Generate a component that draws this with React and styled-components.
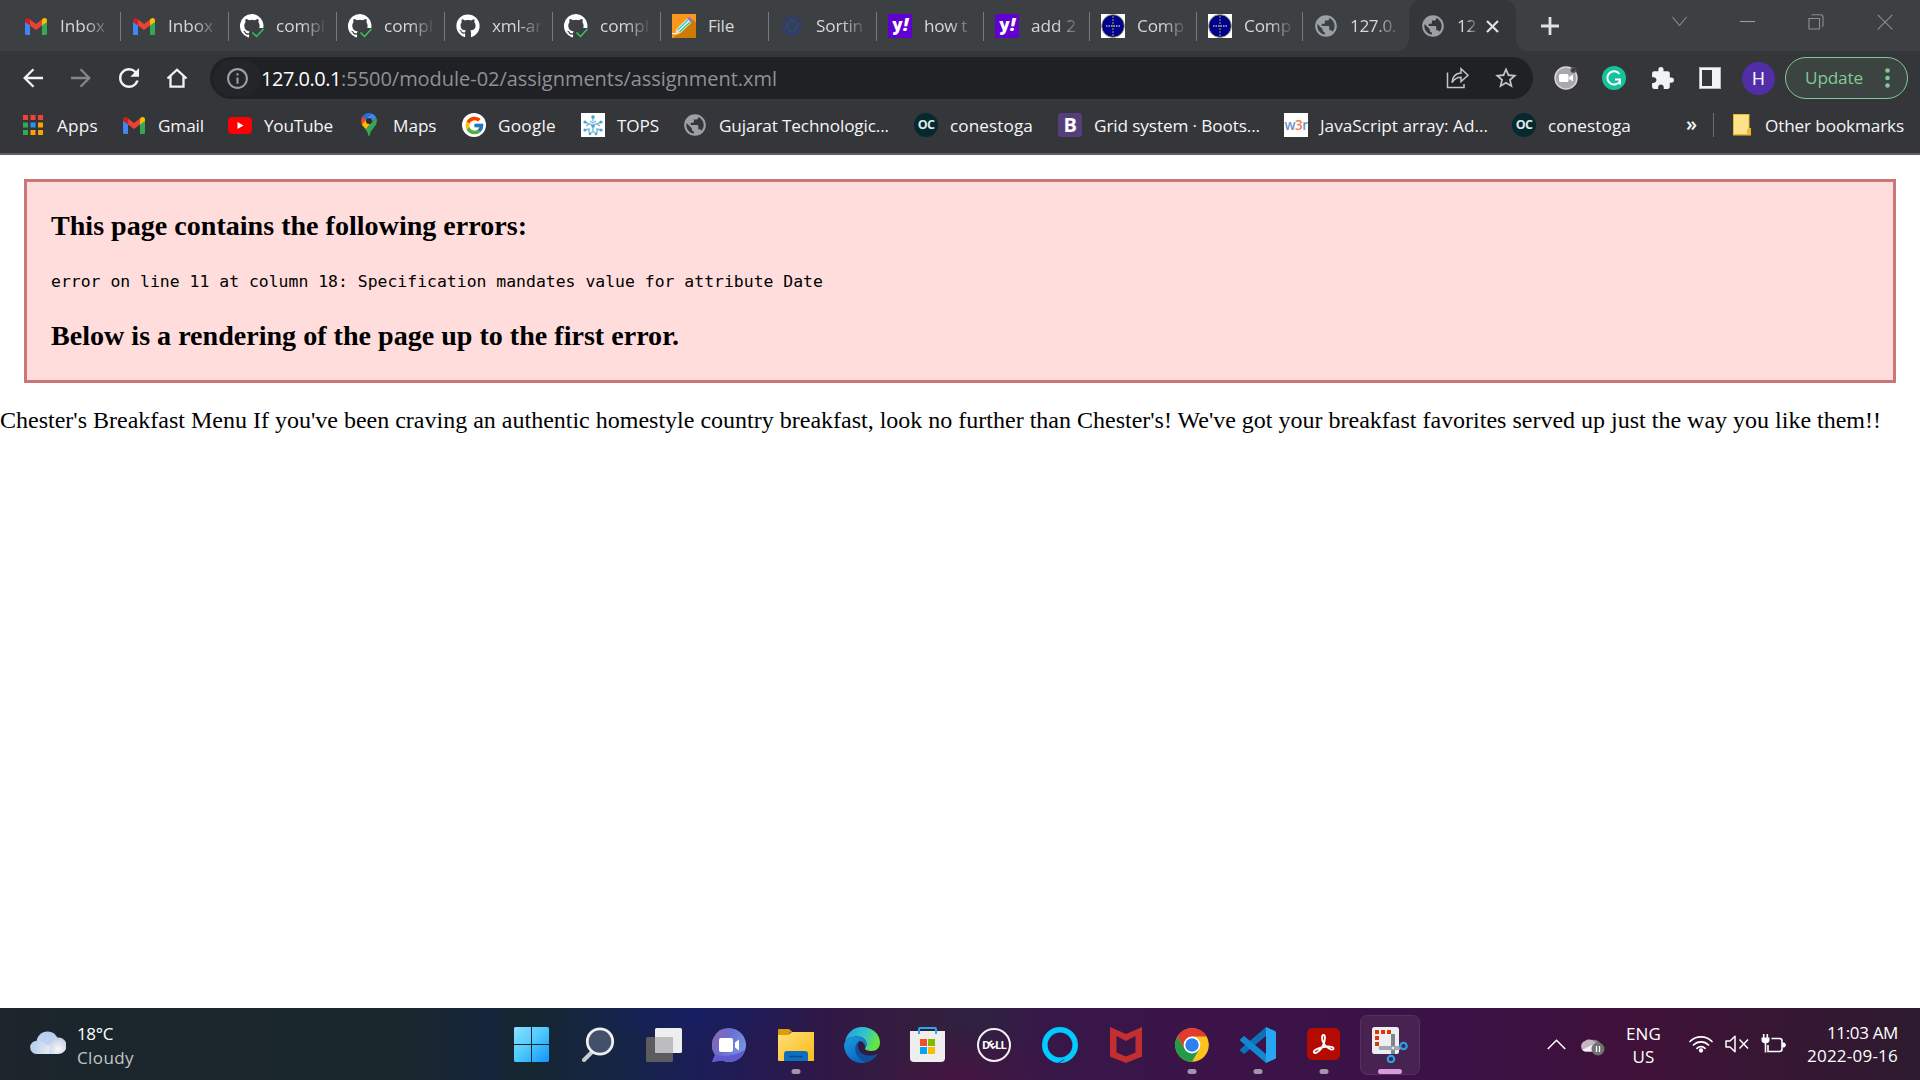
import React, { useLayoutEffect, useRef, useState } from "react";
import styled, { createGlobalStyle, css } from "styled-components";
import { MdPublic, MdExtension, MdRefresh, MdInfoOutline, MdStarBorder } from "react-icons/md";
import { FaGithub } from "react-icons/fa";
import { FcGoogle } from "react-icons/fc";

const ui = '"Open Sans", "Noto Sans", sans-serif';

const GlobalStyle = createGlobalStyle`
  * { box-sizing: border-box; }
  html, body { margin: 0; padding: 0; background: #fff; overflow: hidden; }
  svg { display: block; flex: none; }
`;

const Screen = styled.div`
  width: 1920px;
  height: 1080px;
  display: flex;
  flex-direction: column;
  font-family: ${ui};
  overflow: hidden;
`;

/* ---------- fitted text ---------- */
const FitSpan = styled.span`
  display: inline-block;
  white-space: pre;
`;

function Fit({ w, children }) {
  const ref = useRef(null);
  const [spacing, setSpacing] = useState(0);
  useLayoutEffect(() => {
    const natural = ref.current.getBoundingClientRect().width;
    setSpacing((w - natural) / children.length);
  }, [w, children]);
  return (
    <FitSpan ref={ref} style={{ letterSpacing: `${spacing}px` }}>
      {children}
    </FitSpan>
  );
}

/* ---------- tab strip ---------- */
const TabStrip = styled.div`
  height: 51px;
  flex: none;
  display: flex;
  background: #3c4043;
  padding-left: 12px;
`;

const Tab = styled.div`
  width: ${(p) => p.$w}px;
  height: 51px;
  flex: none;
  display: flex;
  align-items: center;
  padding: 1px 0 0 12px;
  color: #d5d8db;
  font-size: 17.2px;
  line-height: 24px;
  background: linear-gradient(#777b7e, #777b7e) left 12px / ${(p) => (p.$first ? 0 : 1)}px 29px no-repeat;
`;

const ActiveTab = styled(Tab)`
  position: relative;
  background: #35363a;
  border-radius: 12px 12px 0 0;
  padding-left: 12px;
  &::before,
  &::after {
    content: "";
    position: absolute;
    bottom: 0;
    width: 11px;
    height: 11px;
  }
  &::before {
    left: -11px;
    background: radial-gradient(circle at 0 0, transparent 10.5px, #35363a 11px);
  }
  &::after {
    right: -11px;
    background: radial-gradient(circle at 100% 0, transparent 10.5px, #35363a 11px);
  }
`;

const Favicon = styled.span`
  width: 24px;
  height: 24px;
  flex: none;
  display: flex;
  align-items: center;
  justify-content: center;
  color: #9aa0a6;
`;

const TabTitle = styled.span`
  margin-left: 12px;
  width: ${(p) => p.$w || 51}px;
  flex: none;
  white-space: nowrap;
  ${(p) =>
    p.$fade &&
    css`
      mask-image: linear-gradient(90deg, #000 50%, transparent 100%);
    `}
`;

const CloseTab = styled.span`
  margin-left: 8px;
`;

const NewTab = styled.div`
  width: 18px;
  margin-left: 25px;
  display: flex;
  align-items: center;
`;

const WindowControls = styled.div`
  margin-left: auto;
  height: 43px;
  display: flex;
  align-items: center;
  gap: 53px;
  padding-right: 27px;
`;

/* ---------- toolbar ---------- */
const Toolbar = styled.div`
  height: 54px;
  flex: none;
  display: flex;
  align-items: center;
  background: #35363a;
  padding-left: 9px;
`;

const NavButton = styled.div`
  width: 48px;
  height: 42px;
  flex: none;
  display: flex;
  align-items: center;
  justify-content: center;
  color: ${(p) => (p.$dim ? "#85868a" : "#f1f3f4")};
`;

const Omnibox = styled.div`
  width: 1323px;
  height: 42px;
  margin-left: 9px;
  flex: none;
  display: flex;
  align-items: center;
  border-radius: 21px;
  background: #202124;
  color: #9aa0a6;
  padding-left: 3px;
  font-size: 20px;
  line-height: 28px;
`;

const SiteInfo = styled.span`
  width: 48px;
  height: 36px;
  display: flex;
  align-items: center;
  justify-content: center;
  border-radius: 18px;
  background: #242528;
`;

const Url = styled.div`
  display: flex;
  flex: 1;
  padding-top: 2px;
  color: #8e9196;
`;

const Host = styled.span`
  color: #fff;
`;

const OmniActions = styled.div`
  display: flex;
  align-items: center;
  color: #c4c5c7;
  padding-right: 3px;
`;

const OmniAction = styled.span`
  width: 48px;
  display: flex;
  justify-content: center;
  color: #c4c5c7;
`;

const Avatar = styled.div`
  width: 33px;
  height: 33px;
  margin-left: 8px;
  border-radius: 50%;
  display: flex;
  align-items: center;
  justify-content: center;
  background: #512da8;
  color: #f4f1fa;
  font: 400 18px/33px Roboto, sans-serif;
`;

const UpdateButton = styled.div`
  width: 123px;
  height: 42px;
  margin-left: 10px;
  display: flex;
  align-items: center;
  justify-content: space-between;
  padding: 0 17px 0 19px;
  border: 1.5px solid #81c995;
  border-radius: 21px;
  background: #3c4442;
  color: #81c995;
  font-size: 17.2px;
  line-height: 24px;
`;

/* ---------- bookmarks ---------- */
const BookmarksBar = styled.div`
  height: 50px;
  flex: none;
  display: flex;
  align-items: center;
  padding: 0 0 8px 21px;
  background: #35363a;
  border-bottom: 2px solid #606165;
  color: #f4f5f6;
  font-size: 17.2px;
  line-height: 24px;
`;

const Bookmark = styled.div`
  width: ${(p) => p.$w}px;
  flex: none;
  display: flex;
  align-items: center;
  gap: 12px;
`;

const BookmarkLabel = styled.span`
  padding-top: 2px;
`;

const Overflow = styled.span`
  width: 27px;
  margin-left: 1px;
  font-size: 20px;
  font-weight: 600;
  line-height: 20px;
  padding-bottom: 2px;
`;

const OtherBookmarks = styled.div`
  display: flex;
  align-items: center;
  height: 24px;
  padding-left: 19px;
  border-left: 1px solid #6b6d70;
  gap: 14px;
`;

const Chip = styled.span`
  width: 24px;
  height: 24px;
  display: flex;
  align-items: center;
  justify-content: center;
  border-radius: ${(p) => p.$r || "0"};
  background: ${(p) => p.$bg};
  color: ${(p) => p.$fg || "#fff"};
  font: ${(p) => p.$weight || 700} ${(p) => p.$size || 14}px/24px ${ui};
  letter-spacing: -0.6px;
`;

const YahooMark = styled.span`
  display: inline-block;
  padding-bottom: 4px;
  font-weight: 800;
`;

const Bang = styled.i`
  display: inline-block;
  margin-left: 1px;
  font-size: 18px;
`;

const Orange = styled.span`
  color: #f0814f;
`;

/* ---------- page ---------- */
const Page = styled.main`
  height: 853px;
  flex: none;
  padding-top: 24px;
  background: #fff;
  color: #000;
  font: 24px/27px "Liberation Serif", "Times New Roman", serif;
`;

const ErrorBox = styled.section`
  margin: 0 24px;
  height: 204px;
  border: 3px solid #c77;
  background: #fdd;
  padding: 28px 24px 0;
`;

const ErrorHeading = styled.h3`
  margin: 0;
  font-size: 28.08px;
  line-height: 32px;
  font-weight: 700;
`;

const ErrorText = styled.div`
  margin: 28px 0 27px;
  font: 16.44px/23px "DejaVu Sans Mono", monospace;
`;

const Body = styled.div`
  padding-top: 24px;
  white-space: nowrap;
`;

/* ---------- taskbar ---------- */
const Taskbar = styled.footer`
  height: 72px;
  flex: none;
  display: flex;
  align-items: center;
  color: #fff;
  font-size: 17px;
  line-height: 24px;
  background:
    radial-gradient(ellipse 90px 60px at 965px 100%, rgba(78, 14, 66, 0.7), transparent),
    radial-gradient(ellipse 130px 40px at 690px 0, rgba(20, 32, 110, 0.5), transparent),
    linear-gradient(90deg, #1e242c 0, #1a262c 80px, #1a272d 400px, #15253a 490px, #16262f 520px, #152545 620px,
      #1b1d58 700px, #251a50 760px, #321844 840px, #341e3e 920px, #2e2240 975px, #371848 1040px, #3b1348 1200px,
      #3a1246 1450px, #401139 1640px, #371634 1760px, #2d1a2e 1920px);
`;

const Weather = styled.div`
  width: 499px;
  flex: none;
  display: flex;
  align-items: center;
  gap: 11px;
  padding-left: 30px;
`;

const Lines = styled.div`
  display: flex;
  flex-direction: column;
  align-items: ${(p) => p.$align || "flex-start"};
  line-height: ${(p) => p.$lh || 24}px;
  padding-top: ${(p) => p.$pt || 0}px;
`;

const Muted = styled.span`
  color: #c3c5c8;
`;

const Apps = styled.div`
  display: flex;
  align-items: center;
`;

const AppCell = styled.div`
  position: relative;
  width: 66px;
  height: 72px;
  display: flex;
  align-items: center;
  justify-content: center;
  padding-top: 1px;
  &::after {
    content: "";
    display: ${(p) => (p.$running || p.$active ? "block" : "none")};
    position: absolute;
    bottom: 6px;
    left: 50%;
    width: ${(p) => (p.$active ? 24 : 9)}px;
    height: 5px;
    border-radius: 3px;
    transform: translateX(-50%);
    background: ${(p) => (p.$active ? "#d99be0" : "#a294a9")};
  }
`;

const ActiveTile = styled.span`
  width: 60px;
  height: 60px;
  display: flex;
  align-items: center;
  justify-content: center;
  border-radius: 7px;
  border: 1px solid #573060;
  background: #482352;
`;

const DellBadge = styled.span`
  width: 34px;
  height: 34px;
  border-radius: 50%;
  border: 2px solid #f2f2f2;
  display: flex;
  align-items: center;
  justify-content: center;
  font: 700 11px/30px "Open Sans", sans-serif;
  letter-spacing: -0.7px;
`;

const TiltedE = styled.span`
  display: inline-block;
  transform: rotate(-35deg);
`;

const Tray = styled.div`
  margin-left: auto;
  display: flex;
  align-items: center;
  padding-right: 22px;
`;

const TraySlot = styled.div`
  width: ${(p) => p.$w}px;
  flex: none;
  display: flex;
`;

/* ---------- icons ---------- */
const Gmail = () => (
  <svg width="22" height="17" viewBox="0 0 22 17">
    <path d="M0 3v12.500A1.500 1.500 0 0 0 1.500 17H5V6z" fill="#4285f4" />
    <path d="M22 3v12.500a1.500 1.500 0 0 1-1.500 1.500H17V6z" fill="#34a853" />
    <path d="M17 1.600V7.600L22 4V2.200C22 .2 19.600-.7 18 .6z" fill="#fbbc04" />
    <path d="M5 1.600V7.600L0 4V2.200C0 .2 2.400-.7 4 .6z" fill="#c5221f" />
    <path d="M5 7.600V1.500l6 4.600 6-4.600v6.100l-6 4.500z" fill="#ea4335" />
  </svg>
);

const GithubChecked = () => (
  <svg width="24" height="24" viewBox="0 0 24 24">
    <path d="M12 0a12 12 0 0 0-3.800 23.400c.6.100.8-.3.800-.6v-2.200c-3.300.7-4-1.400-4-1.400-.6-1.400-1.400-1.800-1.400-1.800-1-.7.1-.7.1-.7 1.200.1 1.900 1.200 1.900 1.200 1 1.900 2.800 1.300 3.500 1 0-.8.400-1.300.7-1.600-2.700-.3-5.500-1.300-5.500-5.900 0-1.300.5-2.400 1.200-3.200 0-.4-.5-1.600.2-3.200 0 0 1-.3 3.300 1.200a11.500 11.500 0 0 1 6 0C17.300 4.700 18.300 5 18.300 5c.7 1.600.2 2.800.1 3.200.8.800 1.200 1.900 1.200 3.200 0 1-.1 1.900-.4 2.600h4.100A12 12 0 0 0 12 0z" fill="#fff" />
    <path d="M12.500 18.500l4 4 7-7.500" fill="none" stroke="#34c759" strokeWidth="1.500" />
  </svg>
);

const Pencil = () => (
  <svg width="24" height="24" viewBox="0 0 24 24">
    <rect width="24" height="24" fill="#f9981c" />
    <path d="M2 22L22 6l2 3v15H2z" fill="#cf7a05" />
    <path d="M4.500 15l4 4-6 2.500z" fill="#f5deb8" />
    <path d="M4.500 15L15.500 4.500l4 4L8.500 19z" fill="#f4fbf7" />
    <path d="M5.700 16L16.500 5.500" stroke="#3bc7d4" strokeWidth="1.500" />
    <path d="M7.500 18L18.700 7.500" stroke="#2fcf6a" strokeWidth="1.500" />
    <path d="M15.500 4.500l2-1.700 4 4-2 1.700z" fill="#a968c0" />
    <path d="M0 19.500h3" stroke="#fff" strokeWidth="1" />
  </svg>
);

const Gear = () => (
  <svg width="22" height="22" viewBox="0 0 22 22" fill="none">
    <circle cx="11" cy="11" r="8.500" stroke="#2a3c8c" strokeWidth="2.400" strokeDasharray="3 1.400" />
    <circle cx="11" cy="11" r="5" stroke="#2e4a72" strokeWidth="1.800" />
    <circle cx="11" cy="11" r="3.500" fill="#303f66" />
  </svg>
);

const Crest = () => (
  <svg width="24" height="24" viewBox="0 0 24 24">
    <rect width="24" height="24" fill="#fff" />
    <circle cx="12" cy="12" r="11.400" fill="#00008f" stroke="#a9a95c" strokeWidth="1" />
    <path d="M12 2v20" stroke="#8d8b6a" strokeWidth="1.200" strokeDasharray="2 1" />
    <path d="M5 12h14" stroke="#889" strokeWidth="2.200" strokeDasharray="1.500 1" />
  </svg>
);

const AppsGrid = () => (
  <svg width="20" height="20" viewBox="0 0 20 20">
    {["#f44336", "#f44336", "#f44336", "#34a853", "#2196f3", "#ffa000", "#34a853", "#ffa000", "#ffa000"].map((c, i) => (
      <rect key={i} x={(i % 3) * 7.5} y={Math.floor(i / 3) * 7.5} width="5" height="5" fill={c} />
    ))}
  </svg>
);

const YouTube = () => (
  <svg width="24" height="17" viewBox="0 0 24 17">
    <rect width="24" height="17" rx="4" fill="#f00" />
    <path d="M9.500 5v7l6-3.500z" fill="#fff" />
  </svg>
);

const MapPin = () => (
  <svg width="24" height="24" viewBox="0 0 24 24">
    <path d="M4 8.200A8 8 0 0 1 5.800 3l5.200 4.500L6.500 13C5 11.500 4 10 4 8.200z" fill="#ea4335" />
    <path d="M5.800 3A8 8 0 0 1 14.500.5L9 6.500z" fill="#1a73e8" />
    <path d="M14.500.5c2 .7 3.700 2.200 4.600 4L12 12 9 6.500z" fill="#4285f4" />
    <path d="M4.800 11.500L12 4l3 4-6 8.500C7.500 14.500 5.500 13 4.800 11.500z" fill="#fbbc04" />
    <path d="M19.100 4.500c2 4.500 0 7.500-2.600 10.500-2.200 2.600-3.300 4.500-3.700 7-.2 1.200-1.400 1.200-1.600 0-.4-2.200-1.200-3.800-2.700-5.500z" fill="#34a853" />
    <circle cx="12" cy="8" r="3" fill="#2b2c30" />
  </svg>
);

const Snow = () => (
  <svg width="24" height="24" viewBox="0 0 24 24">
    <rect width="24" height="24" fill="#fff" />
    <g stroke="#74b9da" strokeWidth="1.400" fill="none">
      <path d="M12 5v3M8.500 10.500L12 13l3.500-2.500M12 13v5M4 9l4 2-3 2M20 9l-4 2 3 2M4 17l4-1v4M20 17l-4-1v4M9 20.500l3-2 3 2M9 8l3 2 3-2" />
    </g>
    <g fill="#4aa3cf">
      <circle cx="12" cy="4" r="1.800" /><circle cx="4" cy="9" r="1.600" /><circle cx="20" cy="9" r="1.600" />
      <circle cx="4" cy="17" r="1.600" /><circle cx="20" cy="17" r="1.600" /><circle cx="9" cy="21" r="1.300" /><circle cx="15" cy="21" r="1.300" />
      <circle cx="12" cy="13" r="1.800" />
    </g>
  </svg>
);

const Globe = () => <MdPublic size={26} />;

const YahooChip = () => (
  <Chip $bg="#6001d2" $size={17}><YahooMark>y<Bang>!</Bang></YahooMark></Chip>
);
const OcChip = () => <Chip $bg="#06282f" $r="50%" $fg="#dfe8ea" $size={12.5}>OC</Chip>;
const GoogleChip = () => <Chip $bg="#fff" $r="50%"><FcGoogle size={21} /></Chip>;
const BootChip = () => <Chip $bg="#563d7c" $r="3px" $size={20}>B</Chip>;
const W3rChip = () => (
  <Chip $bg="#fff" $fg="#6b90ca" $size={13.5} $weight={600}><span>w<Orange>3</Orange>r</span></Chip>
);

const Line = ({ w, h, d, sw = 2, color = "currentColor" }) => (
  <svg width={w} height={h} viewBox={`0 0 ${w} ${h}`} fill="none" stroke={color} strokeWidth={sw}>
    <path d={d} />
  </svg>
);

const ShareIcon = () => (
  <svg width="24" height="22" viewBox="0 0 24 22" fill="none" stroke="currentColor" strokeWidth="1.500">
    <path d="M1.500 5.500V20.500H18V17" />
    <path d="M6 15.500C6.500 9.500 10 6.300 15 6V1.800l7 6.500-7 6.200v-4.200c-4 0-6.500 1.400-9 5.200z" />
  </svg>
);

const ZoomExt = () => (
  <svg width="24" height="24" viewBox="0 0 24 24">
    <circle cx="12" cy="12" r="11" fill="#a9a9ab" stroke="#d6d6d7" strokeWidth="1.500" />
    <rect x="5" y="8" width="9.500" height="8" rx="1.500" fill="#fff" />
    <path d="M15 11l4-2.500v7L15 13z" fill="#fff" />
    <circle cx="19.500" cy="4" r="3" fill="#55565a" />
    <path d="M18 5.500l3-3" stroke="#28292c" strokeWidth="1.200" />
  </svg>
);

const Grammarly = () => (
  <svg width="24" height="24" viewBox="0 0 24 24">
    <circle cx="12" cy="12" r="12" fill="#15c39a" />
    <path d="M17.500 8A6.700 6.700 0 1 0 17.700 15.500M13 13.500h5v5" fill="none" stroke="#fff" strokeWidth="2" />
  </svg>
);

const SidePanel = () => (
  <svg width="22" height="22" viewBox="0 0 22 22">
    <rect width="22" height="22" fill="#f1f3f4" />
    <rect x="3" y="3" width="10" height="16" fill="#35363a" />
    <rect x=".5" y=".5" width="21" height="21" fill="none" stroke="#b9babc" />
  </svg>
);

const Folder = () => (
  <svg width="18" height="22" viewBox="0 0 18 22">
    <path d="M0 0h16.500v14H18v7.500H0z" fill="#e9b82e" />
    <path d="M1 1h14.500v14l-1.500.5V20H1z" fill="#ffe28a" />
  </svg>
);

const WeatherCloud = () => (
  <svg width="36" height="26" viewBox="0 0 36 26">
    <defs>
      <linearGradient id="wcA" x1="0" y1="0" x2="0" y2="1"><stop offset="0" stopColor="#b9cdee" /><stop offset="1" stopColor="#c6d8fa" /></linearGradient>
      <radialGradient id="wcB" gradientUnits="userSpaceOnUse" cx="27" cy="19" r="24"><stop offset="0" stopColor="#f7f8fa" /><stop offset="1" stopColor="#bcd0ec" /></radialGradient>
      <radialGradient id="wcC" gradientUnits="userSpaceOnUse" cx="28" cy="18" r="11"><stop offset="0" stopColor="#f7f8fa" /><stop offset="1" stopColor="#c3d0e4" /></radialGradient>
    </defs>
    <circle cx="17.500" cy="11.500" r="11" fill="url(#wcA)" />
    <path d="M6.500 23A6.500 6.500 0 0 1 7 9.800c4 0 7 1.700 8.500 4.200h10V23z" fill="url(#wcB)" />
    <path d="M20 14a8.300 8.300 0 1 1 7.700 9H19z" fill="url(#wcC)" />
  </svg>
);

const StartIcon = () => (
  <svg width="36" height="35" viewBox="0 0 36 35">
    <defs><linearGradient id="st" x1="0" y1="0" x2="1" y2="1"><stop offset="0" stopColor="#8ae4ff" /><stop offset=".5" stopColor="#4cc8fc" /><stop offset="1" stopColor="#0e93fa" /></linearGradient></defs>
    <path d="M1 0h16v17H0V1zM18 0h16l1 1v16H18zM0 18h17v17H1l-1-1zM18 18h17v16l-1 1H18z" fill="url(#st)" />
  </svg>
);

const SearchIcon = () => (
  <svg width="34" height="35" viewBox="0 0 34 35">
    <path d="M12 24L3 33" stroke="#c9ccd1" strokeWidth="4" strokeLinecap="round" />
    <circle cx="19" cy="14.500" r="12.700" fill="#434f6b" stroke="#eceef0" strokeWidth="2.800" />
  </svg>
);

const TaskView = () => (
  <svg width="36" height="34" viewBox="0 0 36 34">
    <rect x="0" y="9" width="27" height="25" rx="1.500" fill="#5c5c5f" />
    <rect x="9" y="0" width="27" height="25" rx="1.500" fill="#eeeeef" />
    <path d="M9 9h18v16H10.500L9 23.500z" fill="#bdbdbf" />
  </svg>
);

const Chat = () => (
  <svg width="36" height="34" viewBox="0 0 36 34">
    <defs><linearGradient id="ch" x1="0" y1="0" x2="1" y2=".5"><stop offset="0" stopColor="#8f63a8" /><stop offset=".5" stopColor="#6a6fd0" /><stop offset="1" stopColor="#7694e4" /></linearGradient></defs>
    <path d="M17 0a17 17 0 1 1-7 32.500L0 34l3-7A17 17 0 0 1 17 0z" fill="url(#ch)" />
    <path d="M3 27Q18 30 33 22 A17 17 0 0 1 10 32.500L0 34z" fill="#5f5bce" />
    <rect x="7" y="10" width="14" height="14" rx="2" fill="#fff" />
    <path d="M23 14.500l4-3v11l-4-3z" fill="#fff" />
  </svg>
);

const Explorer = () => (
  <svg width="36" height="34" viewBox="0 0 36 34">
    <defs><linearGradient id="ex" x1="0" y1="0" x2="1" y2="1"><stop offset="0" stopColor="#ffdf78" /><stop offset="1" stopColor="#fbbb14" /></linearGradient></defs>
    <path d="M0 1.500Q0 1 1 1h10l4 3.500h-3L10 8H0z" fill="#e09b0c" />
    <path d="M0 7h10l4-3h22v28.500q0 .5-1 .5H1q-1 0-1-1z" fill="url(#ex)" />
    <path d="M6 33v-7q0-3 3-3h18q3 0 3 3v7z" fill="#0d6fc0" />
    <path d="M11 28.500h14" stroke="#0a4a8a" strokeWidth="1.500" />
  </svg>
);

const Edge = () => (
  <svg width="36" height="36" viewBox="0 0 36 36">
    <defs>
      <linearGradient id="e1" x1="0" y1="0" x2="1" y2=".3"><stop offset="0" stopColor="#1e9fe0" /><stop offset=".6" stopColor="#2fc4d0" /><stop offset="1" stopColor="#67e53f" /></linearGradient>
      <linearGradient id="e2" x1="0" y1="0" x2=".6" y2="1"><stop offset="0" stopColor="#1b9de2" /><stop offset="1" stopColor="#0b68bd" /></linearGradient>
    </defs>
    <path d="M1 15C2.500 6 9.500 0 18 0c10 0 18 7 18 15.500 0 5-3.500 8.500-8.500 8.500-3.500 0-6.500-1-6.500-2.500 0-1 1.500-1.500 1.500-4.500 0-4-4-7.500-9-7.500C8 9.500 3.500 11 1 15z" fill="url(#e1)" />
    <path d="M0 17.500C1 12.500 7 9.500 12.500 9.500c5.500 0 10 3.500 10 7.500 0 1.500-.5 2.500-1.200 3.300C21 17 18.500 14 15.500 14 11 18 12 31 22 35.500c-1.200.4-2.600.5-4 .5C8 36 0 28 0 17.500z" fill="url(#e2)" />
    <path d="M15.500 14c-3.500 2-4.800 6-4 10 1.200 6 6 11 12 11.300 4-1.200 7.500-4 9.700-7.500.4-.8-.3-1.200-.9-.8-7 3.500-16 1-18-5.500-.9-3-.2-6 1.200-7.500z" fill="#114f9c" />
  </svg>
);

const Store = () => (
  <svg width="36" height="35" viewBox="0 0 36 35">
    <path d="M0 4h35v27q0 4-4 4H4q-4 0-4-4z" fill="#eeeeef" />
    <path d="M9 7V2q0-1 1-1h15q1 0 1 1v5" fill="none" stroke="#28a8ea" strokeWidth="2" />
    <rect x="10" y="12" width="7" height="7" fill="#f25022" /><rect x="18" y="12" width="7" height="7" fill="#7fba00" />
    <rect x="10" y="20" width="7" height="7" fill="#00a4ef" /><rect x="18" y="20" width="7" height="7" fill="#ffb900" />
  </svg>
);

const Alexa = () => (
  <svg width="36" height="36" viewBox="0 0 36 36" fill="none">
    <circle cx="18" cy="18" r="15.200" stroke="#00caff" strokeWidth="5.600" />
    <path d="M15.500 32v3.700q6-1.500 9.500-5.500l-5 .5H14q1.500.3 1.500 1.300z" fill="#00caff" />
    <path d="M16.300 35.800q3.500-1.300 6-3.600" stroke="#3a1348" strokeWidth=".8" />
  </svg>
);

const McAfee = () => (
  <svg width="32" height="36" viewBox="0 0 32 36">
    <path fillRule="evenodd" d="M0 0l16 7 16-7v29.500L16 36 0 29.500zM6.500 9v16.500L16 29.500l9.500-4V9L16 14z" fill="#c32f2f" />
  </svg>
);

const Chrome = () => (
  <svg width="34" height="34" viewBox="0 0 34 34">
    <circle cx="17" cy="17" r="16.800" fill="#fcc31e" />
    <path d="M2.450 8.600A16.800 16.800 0 0 1 31.550 8.600H17L9.700 21.200z" fill="#e33b2e" />
    <path d="M2.450 8.600A16.800 16.800 0 0 0 17 33.800L24.300 21.200H9.700z" fill="#229a48" />
    <circle cx="17" cy="17" r="8.400" fill="#fff" />
    <circle cx="17" cy="17" r="6.700" fill="#2f7ff0" />
  </svg>
);

const VSCode = () => (
  <svg width="36" height="36" viewBox="0 0 36 36">
    <path d="M26 9L4 27l-3.500-3q-.8-1 0-2L26 0z" fill="#0a73b8" />
    <path d="M26 27L4 9 .5 12q-.8 1 0 2L26 36z" fill="#1189d2" />
    <path d="M26 0l9 4q1 .5 1 1.500v25q0 1-1 1.500l-9 4z" fill="#27a5f0" />
  </svg>
);

const Acrobat = () => (
  <svg width="34" height="33" viewBox="0 0 34 33">
    <rect width="33" height="32" rx="5" fill="#b30b00" />
    <path d="M7 24.500c-1.500-2 5-5 11-5.800 5-.7 9.500.3 8.300 2.300-1.300 2-7-1.500-9.500-5.200C14.500 12.300 14.500 7 16.500 7s2 5-.5 10.500C13.500 22.500 8.500 26.500 7 24.500z" fill="none" stroke="#fff" strokeWidth="1.900" />
  </svg>
);

const Snip = () => (
  <svg width="36" height="36" viewBox="0 0 36 36">
    <rect width="27" height="27" rx="2.500" fill="#eceef1" />
    <path d="M3 3h4v4H3zM9 3h4v4H9zM15 3h4v4h-4zM3 9h4v4H3zM3 15h4v4H3z" fill="#d83b01" />
    <path d="M21 7v20" stroke="#82868c" strokeWidth="4" />
    <path d="M8.500 21H27" stroke="#a3a7ad" strokeWidth="4" strokeLinecap="round" />
    <circle cx="21" cy="21" r="1.200" fill="#e4e6e8" />
    <circle cx="31.500" cy="19" r="3.200" fill="none" stroke="#2a9fe2" strokeWidth="2.200" />
    <circle cx="19" cy="32" r="3.200" fill="none" stroke="#2a9fe2" strokeWidth="2.200" />
  </svg>
);

const CloudPaused = () => (
  <svg width="25" height="23" viewBox="0 -2 25 23">
    <path d="M7 8a8 8 0 0 1 14 2l-8 4z" fill="#8b7b8a" />
    <path d="M5 16.500A5.500 5.500 0 0 1 5 6c4-3 9-1 12 3v7.500z" fill="#c3b7c2" />
    <path d="M2 15l10-5 8 6.500H5z" fill="#f4f1f4" />
    <circle cx="18" cy="14" r="6.500" fill="#707371" />
    <path d="M16.500 11v6M19.500 11v6" stroke="#fff" strokeWidth="1.300" />
  </svg>
);

const Wifi = () => (
  <svg width="24" height="18" viewBox="0 0 24 18" fill="none" stroke="#fff" strokeWidth="1.700" strokeLinecap="round">
    <path d="M1 6.500a15.500 15.500 0 0 1 22 0M4.500 10a10.500 10.500 0 0 1 15 0M8 13.300a5.600 5.600 0 0 1 8 0" />
    <circle cx="12" cy="15.500" r="1.300" fill="#fff" />
  </svg>
);

const SpeakerMuted = () => (
  <svg width="24" height="18" viewBox="0 0 24 18" fill="none" stroke="#fff" strokeWidth="1.500">
    <path d="M1 6h4l5-4.800v15.600L5 12H1z" strokeLinejoin="round" />
    <path d="M14.500 4.500l8.500 9M23 4.500l-8.500 9" />
  </svg>
);

const Battery = () => (
  <svg width="25" height="20" viewBox="0 0 25 20" fill="none" stroke="#fff">
    <path d="M2.700 0v4M6.300 0v4" strokeWidth="1.600" />
    <path d="M.5 3.500h8V6q0 3-4 3.500Q.5 9 .5 6z" fill="#fff" stroke="none" />
    <path d="M4.500 9v9.500" strokeWidth="1.600" />
    <path d="M10.500 4.500h8q2.500 0 2.500 2.500v8q0 2.500-2.500 2.500H7V11" strokeWidth="1.600" />
    <path d="M21.500 9h2l1 2-1 2h-2z" fill="#fff" />
  </svg>
);

const Github = () => <FaGithub size={24} color="#fff" />;

/* ---------- data ---------- */
const tabs = [
  [108, Gmail, "Inbox", 45],
  [108, Gmail, "Inbox", 45],
  [108, GithubChecked, "compl", 49],
  [108, GithubChecked, "compl", 49],
  [108, Github, "xml-ar", 50],
  [108, GithubChecked, "compl", 49],
  [108, Pencil, "File", 26, true],
  [108, Gear, "Sortin", 47],
  [107, YahooChip, "how t", 43],
  [106, YahooChip, "add 2", 45],
  [107, Crest, "Comp", 47],
  [106, Crest, "Comp", 47],
  [107, Globe, "127.0.", 46],
];

const bookmarks = [
  [101, AppsGrid, "Apps", 41],
  [106, Gmail, "Gmail", 46],
  [129, YouTube, "YouTube", 69],
  [105, MapPin, "Maps", 43.5],
  [119, GoogleChip, "Google", 58],
  [102, Snow, "TOPS", 42],
  [231, Globe, "Gujarat Technologic...", 170],
  [144, OcChip, "conestoga", 83],
  [226, BootChip, "Grid system · Boots...", 166],
  [228, W3rChip, "JavaScript array: Ad...", 168],
  [173, OcChip, "conestoga", 83],
];

const apps = [
  [StartIcon], [SearchIcon], [TaskView], [Chat], [Explorer, true], [Edge], [Store],
  [() => <DellBadge>D<TiltedE>E</TiltedE>LL</DellBadge>],
  [Alexa], [McAfee], [Chrome, true], [VSCode, true], [Acrobat, true],
];

export default function App() {
  return (
    <Screen>
      <GlobalStyle />
      <TabStrip>
        {tabs.map(([w, Icon, title, tw, full], i) => (
          <Tab key={i} $w={w} $first={i === 0}>
            <Favicon><Icon /></Favicon>
            <TabTitle $fade={!full}><Fit w={tw}>{title}</Fit></TabTitle>
          </Tab>
        ))}
        <ActiveTab $w={107} $first>
          <Favicon><Globe /></Favicon>
          <TabTitle $w={21} $fade><Fit w={19}>12</Fit></TabTitle>
          <CloseTab><Line w={13} h={13} d="M1 1l11 11M12 1L1 12" sw={2.2} color="#dfe1e4" /></CloseTab>
        </ActiveTab>
        <NewTab><Line w={18} h={18} d="M9 0v18M0 9h18" sw={2.8} color="#dfe1e4" /></NewTab>
        <WindowControls>
          <Line w={15} h={11} d="M.5 1l7 8.500 7-8.500" sw={1.1} color="#8d9092" />
          <Line w={15} h={3} d="M0 1.500h15" sw={1.1} color="#9a9c9e" />
          <Line w={16} h={16} d="M1 4.500h10.500v10.500H1zM4 1.500Q4 .8 5 .8h7.500q2.500 0 2.500 2.500v8q0 1-1 1" sw={1.1} color="#8d9092" />
          <Line w={16} h={16} d="M.8.8l14.500 14.500M15.300.8L.8 15.300" sw={1.1} color="#8d9092" />
        </WindowControls>
      </TabStrip>

      <Toolbar>
        <NavButton><Line w={20} h={20} d="M20 10H2M10.500 1.200L1.700 10l8.800 8.800" sw={2.3} /></NavButton>
        <NavButton $dim><Line w={20} h={20} d="M0 10h18M9.500 1.200l8.800 8.800-8.800 8.800" sw={2.3} /></NavButton>
        <NavButton><MdRefresh size={30} /></NavButton>
        <NavButton><Line w={22} h={20} d="M1.500 10.500L11 1.700l9.500 8.800M4.500 8v10.700h13V8" sw={2.3} /></NavButton>
        <Omnibox>
          <SiteInfo><MdInfoOutline size={25} /></SiteInfo>
          <Url>
            <Host><Fit w={80}>127.0.0.1</Fit></Host>
            <Fit w={436}>:5500/module-02/assignments/assignment.xml</Fit>
          </Url>
          <OmniActions>
            <OmniAction><ShareIcon /></OmniAction>
            <OmniAction><MdStarBorder size={26} /></OmniAction>
          </OmniActions>
        </Omnibox>
        <TraySlot $w={9} />
        <NavButton><ZoomExt /></NavButton>
        <NavButton><Grammarly /></NavButton>
        <NavButton><MdExtension size={25} /></NavButton>
        <NavButton><SidePanel /></NavButton>
        <Avatar>H</Avatar>
        <UpdateButton>
          <Fit w={58}>Update</Fit>
          <svg width="5" height="20" viewBox="0 0 5 20" fill="#81c995">
            <circle cx="2.500" cy="2.500" r="2.300" /><circle cx="2.500" cy="10" r="2.300" /><circle cx="2.500" cy="17.500" r="2.300" />
          </svg>
        </UpdateButton>
      </Toolbar>

      <BookmarksBar>
        {bookmarks.map(([w, Icon, label, tw], i) => (
          <Bookmark key={i} $w={w}>
            <Favicon><Icon /></Favicon>
            <BookmarkLabel><Fit w={tw}>{label}</Fit></BookmarkLabel>
          </Bookmark>
        ))}
        <Overflow>»</Overflow>
        <OtherBookmarks>
          <Folder />
          <BookmarkLabel><Fit w={139}>Other bookmarks</Fit></BookmarkLabel>
        </OtherBookmarks>
      </BookmarksBar>

      <Page>
        <ErrorBox>
          <ErrorHeading>This page contains the following errors:</ErrorHeading>
          <ErrorText>error on line 11 at column 18: Specification mandates value for attribute Date</ErrorText>
          <ErrorHeading>Below is a rendering of the page up to the first error.</ErrorHeading>
        </ErrorBox>
        <Body>
          Chester's Breakfast Menu If you've been craving an authentic homestyle country breakfast, look no further than
          Chester's! We've got your breakfast favorites served up just the way you like them!!
        </Body>
      </Page>

      <Taskbar>
        <Weather>
          <WeatherCloud />
          <Lines $pt={3}>
            <Fit w={36}>18°C</Fit>
            <Muted><Fit w={57}>Cloudy</Fit></Muted>
          </Lines>
        </Weather>
        <Apps>
          {apps.map(([Icon, running], i) => (
            <AppCell key={i} $running={running}><Icon /></AppCell>
          ))}
          <AppCell $active><ActiveTile><Snip /></ActiveTile></AppCell>
        </Apps>
        <Tray>
          <TraySlot $w={33}><Line w={19} h={11} d="M.8 10l8.700-8.700 8.700 8.700" sw={1.5} /></TraySlot>
          <TraySlot $w={46}><CloudPaused /></TraySlot>
          <TraySlot $w={63}>
            <Lines $align="center" $lh={23} $pt={1}><Fit w={35}>ENG</Fit><Fit w={22}>US</Fit></Lines>
          </TraySlot>
          <TraySlot $w={36}><Wifi /></TraySlot>
          <TraySlot $w={36}><SpeakerMuted /></TraySlot>
          <TraySlot $w={46}><Battery /></TraySlot>
          <Lines $align="flex-end" $lh={23}><Fit w={71}>11:03 AM</Fit><Fit w={91}>2022-09-16</Fit></Lines>
        </Tray>
      </Taskbar>
    </Screen>
  );
}
